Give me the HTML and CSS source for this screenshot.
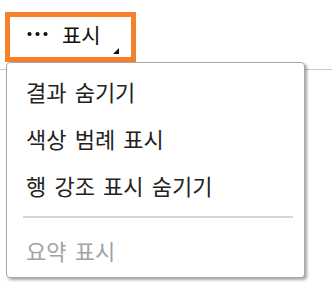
FILE: index.html
```html
<!DOCTYPE html>
<html lang="ko">
<head>
<meta charset="utf-8">
<link rel="stylesheet" href="styles.css">
</head>
<body>
<div class="page">
  <div class="toolbar">
    <div class="show-btn">
      <svg class="dots" width="22" height="6" viewBox="0 0 22 6"><circle cx="2.5" cy="3" r="2.1"/><circle cx="10.5" cy="3" r="2.1"/><circle cx="18.5" cy="3" r="2.1"/></svg>
      <span class="btn-label">표시</span>
      <svg class="corner" width="6" height="6" viewBox="0 0 6 6"><polygon points="6,0 6,6 0,6"/></svg>
    </div>
  </div>
  <div class="menu">
    <div class="item">결과 숨기기</div>
    <div class="item">색상 범례 표시</div>
    <div class="item">행 강조 표시 숨기기</div>
    <div class="sep"></div>
    <div class="item disabled">요약 표시</div>
  </div>
</div>
</body>
</html>
```
FILE: styles.css
```css
html, body {
  margin: 0;
  padding: 0;
  background: #ffffff;
}
.page {
  position: relative;
  width: 332px;
  height: 297px;
  font-family: "Noto Sans CJK KR", "Noto Sans", sans-serif;
  color: #222222;
}
.toolbar {
  height: 70px;
  box-sizing: border-box;
  border-bottom: 1px solid #c9c9c9;
  padding: 12px 0 0 5px;
}
.show-btn {
  width: 131px;
  height: 50px;
  box-sizing: border-box;
  border: 5px solid #f5822a;
  display: flex;
  align-items: center;
  padding-left: 17px;
  position: relative;
}
.dots {
  fill: #111111;
  margin-top: -6px;
}
.btn-label {
  font-size: 21px;
  margin-left: 13px;
  margin-top: -7px;
  color: #111111;
}
.corner {
  position: absolute;
  left: 103px;
  top: 31px;
  fill: #111111;
}
.menu {
  position: absolute;
  left: 6px;
  top: 62px;
  width: 299px;
  box-sizing: border-box;
  border: 1px solid #a9a9a9;
  border-radius: 4px;
  background: #ffffff;
  box-shadow: 2px 2px 3px rgba(0, 0, 0, 0.35);
  padding: 5px 0 3px 0;
}
.item {
  height: 47px;
  line-height: 47px;
  padding-left: 19px;
  font-size: 22px;
  word-spacing: 2px;
  white-space: nowrap;
}
.item.disabled {
  color: #a3a3a3;
}
.sep {
  height: 2px;
  background: #d6d6d6;
  margin: 7px 11px 9px 16px;
}
```
